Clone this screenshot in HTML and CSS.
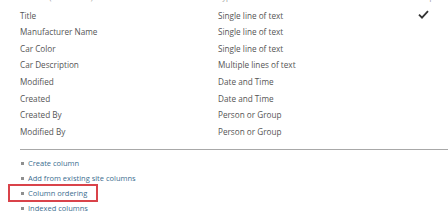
FILE: index.html
```html
<!DOCTYPE html>
<html lang="en">
<head>
    <meta charset="UTF-8">
    <title>List Settings - Columns</title>
    <link rel="stylesheet" href="styles.css">
</head>
<body>
    <div class="settings-page">

        <div class="column-table">
            <div class="column-row column-head">
                <div class="col-name">Column (click to edit)</div>
                <div class="col-type">Type</div>
                <div class="col-req">Required</div>
            </div>
            <div class="column-row">
                <div class="col-name">Title</div>
                <div class="col-type">Single line of text</div>
                <div class="col-req">
                    <svg class="check" width="11" height="9" viewBox="0 0 11 9">
                        <path d="M1 4.6 L4 7.6 L10 1.2" fill="none" stroke="#333" stroke-width="1.8"/>
                    </svg>
                </div>
            </div>
            <div class="column-row">
                <div class="col-name">Manufacturer Name</div>
                <div class="col-type">Single line of text</div>
                <div class="col-req"></div>
            </div>
            <div class="column-row">
                <div class="col-name">Car Color</div>
                <div class="col-type">Single line of text</div>
                <div class="col-req"></div>
            </div>
            <div class="column-row">
                <div class="col-name">Car Description</div>
                <div class="col-type">Multiple lines of text</div>
                <div class="col-req"></div>
            </div>
            <div class="column-row">
                <div class="col-name">Modified</div>
                <div class="col-type">Date and Time</div>
                <div class="col-req"></div>
            </div>
            <div class="column-row">
                <div class="col-name">Created</div>
                <div class="col-type">Date and Time</div>
                <div class="col-req"></div>
            </div>
            <div class="column-row">
                <div class="col-name">Created By</div>
                <div class="col-type">Person or Group</div>
                <div class="col-req"></div>
            </div>
            <div class="column-row">
                <div class="col-name">Modified By</div>
                <div class="col-type">Person or Group</div>
                <div class="col-req"></div>
            </div>
        </div>

        <ul class="column-links">
            <li><a href="#">Create column</a></li>
            <li><a href="#">Add from existing site columns</a></li>
            <li class="highlighted"><a href="#">Column ordering</a></li>
            <li><a href="#">Indexed columns</a></li>
        </ul>

    </div>
</body>
</html>
```

FILE: styles.css
```css
body {
    font-family: "Open Sans", "Noto Sans", Arial, sans-serif;
    margin: 0;
    background-color: #fff;
    color: #555;
}

.settings-page {
    padding-left: 20px;
}

.column-table {
    margin-top: -10px;
    border-bottom: 1px solid #a8a8a8;
    padding-bottom: 9px;
}

.column-row {
    display: grid;
    grid-template-columns: 198px 196px auto;
    height: 16.6px;
    line-height: 16.6px;
    font-size: 8.2px;
    color: #555;
}

.column-head {
    font-size: 7.5px;
    color: #999;
    height: 17.7px;
    line-height: 14px;
}

.col-req {
    padding-left: 4px;
}

.check {
    display: block;
    margin-top: 2px;
}

/* Links below the table */
.column-links {
    list-style: none;
    margin: 0;
    padding: 6px 0 0 0;
}

.column-links li {
    position: relative;
    height: 15px;
    line-height: 15px;
    padding-left: 8px;
    font-size: 7.5px;
}

.column-links li::before {
    content: "";
    position: absolute;
    left: 1px;
    top: 6px;
    width: 3px;
    height: 3px;
    background-color: #8f8f8f;
}

.column-links a {
    color: #3b6e8f;
    text-decoration: none;
}

.column-links li.highlighted::after {
    content: "";
    position: absolute;
    left: -12px;
    top: -2px;
    width: 86px;
    height: 14px;
    border: 2px solid #d9434a;
}
```
